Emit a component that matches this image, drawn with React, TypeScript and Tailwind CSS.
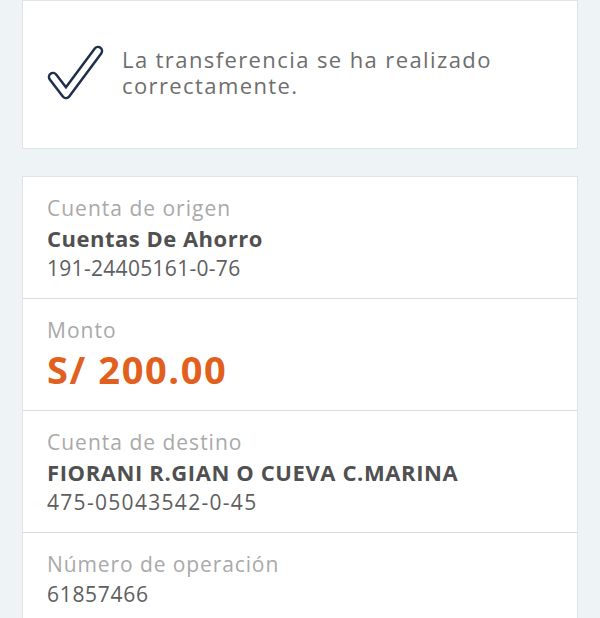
import React from "react";

const font = { fontFamily: "'Open Sans', 'Noto Sans', sans-serif" };

function Check() {
  return (
    <svg width="60" height="60" viewBox="0 0 60 60" className="shrink-0">
      <path d="M7 32 L20 49 L52 6" fill="none" stroke="#1f2f4b" strokeWidth="10.5" strokeLinecap="round" strokeLinejoin="round" />
      <path d="M7 32 L20 49 L52 6" fill="none" stroke="#ffffff" strokeWidth="5.5" strokeLinecap="round" strokeLinejoin="round" />
    </svg>
  );
}

export default function App() {
  return (
    <div className="w-[600px] h-[618px] overflow-hidden bg-[#eef3f6] px-[22px]" style={font}>
      <div className="h-[149px] mt-0 bg-white border border-[#dfe3e5] flex items-center pl-[24px] pr-2">
        <div className="mt-[1px] -ml-[1px]"><Check /></div>
        <div className="ml-[16px] -mt-[6px] text-[22px] leading-[26px] text-[#6e6e6e] tracking-[1.4px]">
          <div>La transferencia se ha realizado</div>
          <div>correctamente.</div>
        </div>
      </div>
      <div className="mt-[27px] bg-white border border-[#dfe3e5]">
        <div className="h-[122px] px-[24px] pt-[16px] border-b border-[#dcdcdc]">
          <div className="text-[21px] leading-[30px] text-[#a9a9a9] tracking-[1px]">Cuenta de origen</div>
          <div className="text-[22px] leading-[30px] font-bold text-[#505050] tracking-[0.5px]">Cuentas De Ahorro</div>
          <div className="text-[21px] leading-[30px] text-[#5e5e5e] tracking-[0.3px]">191-24405161-0-76</div>
        </div>
        <div className="h-[112px] px-[24px] pt-[16px] border-b border-[#dcdcdc]">
          <div className="text-[21px] leading-[30px] text-[#a9a9a9] tracking-[1px]">Monto</div>
          <div className="text-[38px] leading-[48px] font-bold text-[#e2601d] tracking-[1.6px]">S/ 200.00</div>
        </div>
        <div className="h-[122px] px-[24px] pt-[16px] border-b border-[#dcdcdc]">
          <div className="text-[21px] leading-[30px] text-[#a9a9a9] tracking-[1px]">Cuenta de destino</div>
          <div className="text-[22px] leading-[30px] font-bold text-[#505050] tracking-[0.6px]">FIORANI R.GIAN O CUEVA C.MARINA</div>
          <div className="text-[21px] leading-[30px] text-[#5e5e5e] tracking-[1.3px]">475-05043542-0-45</div>
        </div>
        <div className="h-[122px] px-[24px] pt-[16px]">
          <div className="text-[21px] leading-[30px] text-[#a9a9a9] tracking-[0.9px]">Número de operación</div>
          <div className="text-[21px] leading-[30px] text-[#5e5e5e] tracking-[0.7px]">61857466</div>
        </div>
      </div>
    </div>
  );
}
